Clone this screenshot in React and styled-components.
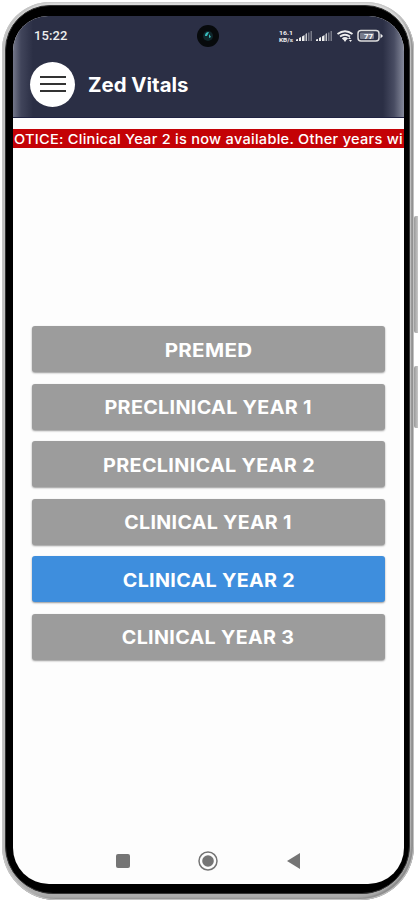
import React from "react";
import styled, { createGlobalStyle } from "styled-components";

const Global = createGlobalStyle`
  * { box-sizing: border-box; }
  body { margin: 0; background: #fff; overflow: hidden; font-family: Inter, "Open Sans", sans-serif; }
`;

const Stage = styled.div`
  position: relative;
  width: 418px;
  height: 900px;
  padding: 2px 4px 0 2px;
  background: #fff;
`;

const SideKey = styled.div`
  position: absolute;
  right: 0;
  top: ${(p) => p.$top}px;
  width: 4px;
  height: ${(p) => p.$height}px;
  border-radius: 2px 0 0 2px;
  background: linear-gradient(90deg, #999, #c8c8c8);
`;

const Rim = styled.div`
  position: relative;
  width: 412px;
  height: 898px;
  padding: 3px 4px 6px 3px;
  border-radius: 48px 48px 54px 54px;
  background: linear-gradient(180deg, #d8d8d8 0, #c2c2c2 90%, #aaa 100%);
  box-shadow: inset 0 0 1px 1px #c8c8c8, inset -3px -2px 2px #888, inset 3px 0 2px #bbb;
`;

const Bezel = styled.div`
  width: 405px;
  height: 889px;
  padding: 10px 6px 10px 7px;
  border-radius: 45px 45px 48px 48px;
  border: 1px solid #333;
  background: #000;
`;

const Screen = styled.div`
  display: flex;
  flex-direction: column;
  width: 391px;
  height: 868px;
  overflow: hidden;
  border-radius: 35px 35px 36px 36px;
  background: #fdfdfd;
`;

const Header = styled.header`
  flex: none;
  height: 102px;
  background: linear-gradient(90deg, #737689 0, #41455b 8px, #2b2f45 20px, #2b2f45 370px, #484c62 381px, #85899a 391px);
  border-bottom: 1px solid #202342;
`;

const StatusBar = styled.div`
  position: relative;
  display: flex;
  align-items: center;
  justify-content: space-between;
  height: 39px;
  padding: 0 20px 0 21px;
  color: #eee;
`;

const Clock = styled.span`
  font: 500 13px/16px Roboto, sans-serif;
  letter-spacing: 0.1px;
`;

const Camera = styled.svg`
  position: absolute;
  left: 184px;
  top: 9px;
`;

const TitleBar = styled.div`
  display: flex;
  align-items: center;
  gap: 13px;
  height: 58px;
  padding-left: 17px;
`;

const MenuButton = styled.button`
  display: flex;
  align-items: center;
  justify-content: center;
  width: 45px;
  height: 45px;
  padding: 0;
  border: 0;
  border-radius: 50%;
  background: #fff;
`;

const Title = styled.h1`
  margin: 0;
  padding-top: 2px;
  color: #fff;
  font-size: 19.5px;
  font-weight: 700;
  line-height: 24px;
  transform: scaleX(1.045);
  transform-origin: left;
`;

const Notice = styled.div`
  display: flex;
  flex: none;
  height: 19px;
  margin-top: 11px;
  padding-left: 1px;
  overflow: hidden;
  background: #c40206;
  color: #fff;
  font-size: 13.5px;
  font-weight: 500;
  line-height: 20px;
  white-space: nowrap;
`;

const NoticeText = styled.span`
  letter-spacing: 0.25px;
  transform: scaleX(1.078);
  transform-origin: left;
`;

const YearList = styled.main`
  display: flex;
  flex: 1;
  flex-direction: column;
  gap: 11.6px;
  padding: 178px 19px 0;
`;

const YearButton = styled.button`
  height: 46px;
  padding: 1px 0 0;
  border: 0;
  border-radius: 3px;
  background: ${(p) => (p.$active ? "#3e8edd" : "#9c9c9c")};
  box-shadow: 0 1px 2px rgba(0, 0, 0, 0.4);
  color: #fff;
  font: 700 18.5px/24px Inter, sans-serif;
  letter-spacing: 0.3px;
`;

const YearLabel = styled.span`
  display: inline-block;
  transform: scaleX(${(p) => p.$stretch});
`;

const NavBar = styled.nav`
  display: flex;
  flex: none;
  align-items: center;
  height: 46px;
  padding-left: 103px;
`;

const NavIcon = styled.svg`
  flex: none;
  margin-right: ${(p) => p.$gap || 0}px;
`;

const years = [
  ["PREMED", 1.11],
  ["PRECLINICAL YEAR 1", 1.067],
  ["PRECLINICAL YEAR 2", 1.07],
  ["CLINICAL YEAR 1", 1.06],
  ["CLINICAL YEAR 2", 1.065],
  ["CLINICAL YEAR 3", 1.065],
];

function StatusIcons() {
  return (
    <svg width="106" height="16" viewBox="0 0 106 16" fill="#eee">
      <g fontFamily="Roboto, sans-serif" fontWeight="700">
        <text x="1" y="6.5" fontSize="6" textLength="14" lengthAdjust="spacingAndGlyphs">16.1</text>
        <text x="1" y="14" fontSize="6" textLength="14" lengthAdjust="spacingAndGlyphs">KB/s</text>
      </g>
      {[18, 38].map((x) => (
        <g key={x} transform={`translate(${x} 0)`}>
          <path d="M0 13v-1.500l2-.5v2zM3 13v-3l2-1v4zM6 13V8.500L8.500 7v6z" />
          <path d="M9.500 13V6L11 5v8z" opacity=".8" />
          <path d="M12 13V4.500h1.500V13zM14.500 13V3H16v10z" opacity=".4" />
        </g>
      ))}
      <g fill="none" stroke="#eee" strokeWidth="1.8">
        <path d="M59.5 6Q67 .5 74.5 6M62 8.5Q67 5 72 8.500M64.500 11Q67 9 69.500 11" />
      </g>
      <path d="M65 11h4l-2 3zM70 11l1.500-2 1.500 2zM71 12h3l-1.500 2z" />
      <rect x="80" y="2.500" width="21" height="10.500" rx="3" fill="none" stroke="#ddd" strokeWidth="1.500" />
      <rect x="82" y="4.500" width="14" height="6.500" rx="1" fill="#777b8c" />
      <path d="M102.500 5.500L105 8l-2.500 2.500z" />
      <text x="86" y="11" fontFamily="Roboto, sans-serif" fontSize="8" fontWeight="700" fill="#fff">77</text>
    </svg>
  );
}

export default function App() {
  return (
    <>
      <Global />
      <Stage>
        <SideKey $top={216} $height={117} />
        <SideKey $top={366} $height={62} />
        <Rim>
          <Bezel>
            <Screen>
              <Header>
                <StatusBar>
                  <Clock>15:22</Clock>
                  <Camera width="22" height="22" viewBox="0 0 22 22">
                    <circle cx="11" cy="11" r="11" fill="#070a0c" />
                    <circle cx="11" cy="11" r="5" fill="#10272c" />
                    <path d="M8 11Q8 7 12 7l-2 4zM12 9l2 3-2 1z" fill="#37bdbc" />
                  </Camera>
                  <StatusIcons />
                </StatusBar>
                <TitleBar>
                  <MenuButton aria-label="Menu">
                    <svg width="26" height="18" viewBox="0 0 26 18" stroke="#333" strokeWidth="2">
                      <path d="M0 2h26M0 9h26M0 16h26" />
                    </svg>
                  </MenuButton>
                  <Title>Zed Vitals</Title>
                </TitleBar>
              </Header>
              <Notice>
                <NoticeText>OTICE: Clinical Year 2 is now available. Other years wi</NoticeText>
              </Notice>
              <YearList>
                {years.map(([label, stretch]) => (
                  <YearButton key={label} $active={label === "CLINICAL YEAR 2"}>
                    <YearLabel $stretch={stretch}>{label}</YearLabel>
                  </YearButton>
                ))}
              </YearList>
              <NavBar>
                <NavIcon $gap={68} width="14" height="14" viewBox="0 0 14 14">
                  <rect width="14" height="14" rx="2" fill="#757575" />
                </NavIcon>
                <NavIcon $gap={69} width="20" height="20" viewBox="0 0 20 20">
                  <circle cx="10" cy="10" r="9" fill="none" stroke="#757575" strokeWidth="1.5" />
                  <circle cx="10" cy="10" r="5.8" fill="#757575" />
                </NavIcon>
                <NavIcon width="14" height="16" viewBox="0 0 14 16">
                  <path d="M13 0v16L0 8z" fill="#757575" />
                </NavIcon>
              </NavBar>
            </Screen>
          </Bezel>
        </Rim>
      </Stage>
    </>
  );
}
